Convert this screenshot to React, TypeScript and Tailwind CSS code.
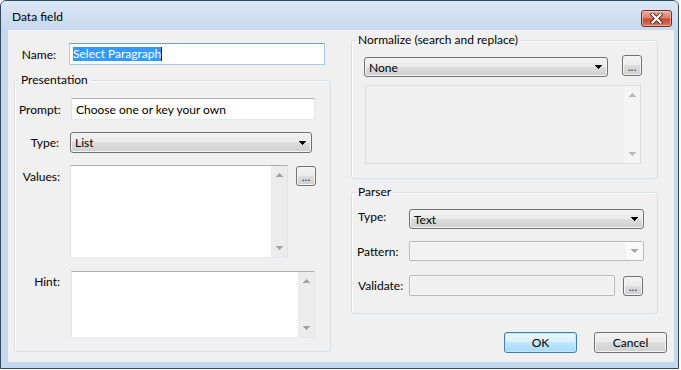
import React from 'react';

// small pixel triangle used for drop-downs and scroll arrows
const Tri = ({ up = false, color = '#000' }: { up?: boolean; color?: string }) => (
  <svg width="7" height="4" viewBox="0 0 7 4" shapeRendering="crispEdges" className={up ? 'rotate-180' : ''}>
    <path d="M0 0H7V1H6V2H5V3H4V4H3V3H2V2H1V1H0Z" fill={color} />
  </svg>
);

const VScroll = ({ color = '#a3a3a3', track = 'bg-[#ececec]' }: { color?: string; track?: string }) => (
  <div className={`w-[16px] h-full flex flex-col justify-between items-center py-[7px] ${track}`}>
    <Tri up color={color} />
    <Tri color={color} />
  </div>
);

const Combo = ({ value, className = '' }: { value: string; className?: string }) => (
  <div
    className={`flex items-center justify-between rounded-[3px] border border-[#707070] bg-[linear-gradient(#f2f2f2_0%,#ebebeb_50%,#dddddd_50%,#cfcfcf_100%)] shadow-[inset_0_0_0_1px_#f6f6f6] pl-[4px] pr-[5px] ${className}`}
  >
    <span>{value}</span>
    <Tri />
  </div>
);

const Dots = ({ className = '' }: { className?: string }) => (
  <div
    className={`flex items-end justify-center rounded-[3px] border border-[#707070] bg-[linear-gradient(#f2f2f2_0%,#ebebeb_50%,#dddddd_50%,#cfcfcf_100%)] shadow-[inset_0_0_0_1px_#f6f6f6] pb-[2px] text-[#1c3560] leading-[12px] ${className}`}
  >
    ...
  </div>
);

const textBox = 'border border-[#e2e3ea] border-t-[#abadb3] border-b-[#e3e9ef] bg-white';

export default function App() {
  return (
    <div className="w-[681px] h-[370px] bg-white font-['Lato',sans-serif] text-[12px] leading-[15px] text-black">
      <div className="w-[679px] h-[369px] flex flex-col rounded-t-[6px] border border-[#34485e] bg-[#c4d8ee] overflow-hidden">
        {/* Title bar */}
        <div className="h-[29px] flex items-start justify-between pl-[11px] pr-[6px] bg-[linear-gradient(#dbe7f5,#c6d9ee)]">
          <span className="mt-[8px]">Data field</span>
          <div className="mt-[9px] w-[31px] h-[17px] flex items-center justify-center rounded-[3px] border border-[#7a2a1e] bg-[linear-gradient(#eab0a3_0%,#d9806f_45%,#c44a35_55%,#d47b66_100%)] shadow-[inset_0_0_0_1px_rgba(255,220,210,0.5)]">
            <svg width="13" height="11" viewBox="0 0 13 11">
              <path d="M2.5 1.5L10.5 9.5M10.5 1.5L2.5 9.5" stroke="#5b2018" strokeWidth="4" strokeLinecap="square" />
              <path d="M2.5 1.5L10.5 9.5M10.5 1.5L2.5 9.5" stroke="#ffffff" strokeWidth="2.2" strokeLinecap="square" />
            </svg>
          </div>
        </div>

        {/* Client area */}
        <div className="flex-1 ml-[7px] mr-[4px] mb-[6px] flex bg-[#f0f0f0] pl-[6px]">
          {/* Left column */}
          <div className="w-[317px] pt-[13px] flex flex-col">
            <div className="flex items-center">
              <span className="w-[42px] text-right">Name:</span>
              <div className="ml-[13px] w-[256px] h-[22px] flex items-center pl-[3px] border border-[#a4c9e3] border-t-[#6fa3d3] bg-white">
                <span className="h-[14px] leading-[14px] bg-[#3399ff] text-white">Select Paragraph</span>
                <span className="w-px h-[14px] bg-[#1d1d1d]" />
              </div>
            </div>

            <fieldset className="mt-[8px] h-[279px] rounded-[3px] border border-[#d5dfe5] shadow-[inset_1px_1px_0_#fff] px-[4px]">
              <legend className="px-[2px] leading-[14px]">Presentation</legend>

              <div className="mt-[11px] flex items-center">
                <span className="w-[41px] text-right">Prompt:</span>
                <div className={`ml-[11px] w-[244px] h-[22px] flex items-center pl-[4px] ${textBox}`}>
                  Choose one or key your own
                </div>
              </div>

              <div className="mt-[12px] flex items-center">
                <span className="w-[40px] text-right">Type:</span>
                <Combo value="List" className="ml-[11px] w-[242px] h-[21px]" />
              </div>

              <div className="mt-[12px] flex items-start">
                <span className="w-[41px] mt-[4px] text-right">Values:</span>
                <div className={`ml-[10px] w-[218px] h-[93px] flex justify-end ${textBox}`}>
                  <VScroll />
                </div>
                <Dots className="ml-[8px] mt-[1px] w-[20px] h-[20px]" />
              </div>

              <div className="mt-[13px] flex items-start">
                <span className="w-[41px] mt-[3px] text-right">Hint:</span>
                <div className={`ml-[11px] w-[244px] h-[67px] flex justify-end ${textBox}`}>
                  <VScroll />
                </div>
              </div>
            </fieldset>
          </div>

          {/* Right column */}
          <div className="ml-[20px] flex-1 pt-[3px] flex flex-col">
            <fieldset className="w-[307px] h-[146px] rounded-[3px] border border-[#d5dfe5] shadow-[inset_1px_1px_0_#fff] px-[4px]">
              <legend className="px-[2px] leading-[14px]">Normalize (search and replace)</legend>
              <div className="mt-[8px] flex items-start">
                <Combo value="None" className="ml-[8px] mt-[2px] w-[244px] h-[20px]" />
                <Dots className="ml-[14px] w-[20px] h-[21px]" />
              </div>
              <div className="mt-[8px] ml-[9px] w-[276px] h-[79px] flex justify-end border border-[#d9dcdf] bg-[#f0f0f0]">
                <VScroll color="#b9b9b9" track="bg-[#f4f4f4]" />
              </div>
            </fieldset>

            <fieldset className="mt-[6px] w-[307px] h-[129px] rounded-[3px] border border-[#d5dfe5] shadow-[inset_1px_1px_0_#fff] px-[4px]">
              <legend className="px-[2px] leading-[14px]">Parser</legend>

              <div className="mt-[10px] flex items-start">
                <span className="w-[53px] pl-[2px]">Type:</span>
                <Combo value="Text" className="w-[235px] h-[20px]" />
              </div>

              <div className="mt-[12px] flex items-start">
                <span className="w-[53px] pl-[1px] mt-[3px]">Pattern:</span>
                <div className="w-[235px] h-[20px] flex justify-between rounded-[2px] border border-[#b5b9bd] bg-[#f2f2f2] shadow-[inset_0_0_0_1px_#f8f8f8]">
                  <span />
                  <div className="w-[17px] flex items-center justify-center bg-[#f9f9f9]">
                    <Tri color="#a6a6a6" />
                  </div>
                </div>
              </div>

              <div className="mt-[14px] flex items-start">
                <span className="w-[53px] pl-[2px] mt-[3px]">Validate:</span>
                <div className="w-[206px] h-[21px] rounded-[2px] border border-[#b5b9bd] bg-[#f0f0f0] shadow-[inset_0_0_0_1px_#f7f7f7]" />
                <Dots className="ml-[8px] mt-[1px] w-[20px] h-[20px]" />
              </div>
            </fieldset>

            <div className="mt-[18px] pr-[7px] flex justify-end gap-[17px]">
              <div className="w-[73px] h-[21px] flex items-center justify-center rounded-[3px] border border-[#3c7fb1] bg-[linear-gradient(#eaf6fd_0%,#d9f0fc_50%,#bee6fd_50%,#a7d9f5_100%)] shadow-[inset_0_0_0_1px_#c6e6fa]">
                OK
              </div>
              <div className="w-[73px] h-[21px] flex items-center justify-center rounded-[3px] border border-[#707070] bg-[linear-gradient(#f2f2f2_0%,#ebebeb_50%,#dddddd_50%,#cfcfcf_100%)] shadow-[inset_0_0_0_1px_#f6f6f6]">
                Cancel
              </div>
            </div>
          </div>
        </div>
      </div>
    </div>
  );
}
